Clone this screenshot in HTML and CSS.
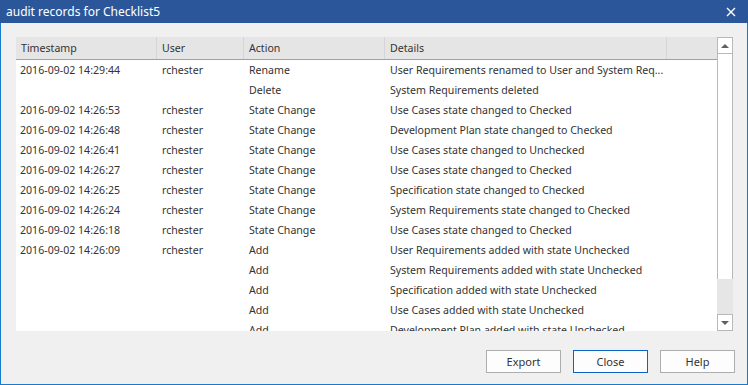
FILE: index.html
```html
<!DOCTYPE html>
<html lang="en">
<head>
  <meta charset="UTF-8" />
  <title>audit records for Checklist5</title>
  <link rel="stylesheet" href="styles.css">
</head>
<body>
  <div class="titlebar">
    <span class="title">audit records for Checklist5</span>
    <svg class="close-x" width="10" height="10" viewBox="0 0 10 10">
      <path d="M1 1 L9 9 M9 1 L1 9" stroke="#fff" stroke-width="1.4" fill="none"/>
    </svg>
  </div>

  <div class="dialog">
    <div class="listbox">
      <div class="list">
        <div class="row head">
          <div class="cell">Timestamp</div>
          <div class="cell">User</div>
          <div class="cell">Action</div>
          <div class="cell">Details</div>
          <div class="cell"></div>
        </div>
        <div class="rows">
          <div class="row"><div class="cell">2016-09-02 14:29:44</div><div class="cell">rchester</div><div class="cell">Rename</div><div class="cell">User Requirements renamed to User and System Req...</div></div>
          <div class="row"><div class="cell"></div><div class="cell"></div><div class="cell">Delete</div><div class="cell">System Requirements deleted</div></div>
          <div class="row"><div class="cell">2016-09-02 14:26:53</div><div class="cell">rchester</div><div class="cell">State Change</div><div class="cell">Use Cases state changed to Checked</div></div>
          <div class="row"><div class="cell">2016-09-02 14:26:48</div><div class="cell">rchester</div><div class="cell">State Change</div><div class="cell">Development Plan state changed to Checked</div></div>
          <div class="row"><div class="cell">2016-09-02 14:26:41</div><div class="cell">rchester</div><div class="cell">State Change</div><div class="cell">Use Cases state changed to Unchecked</div></div>
          <div class="row"><div class="cell">2016-09-02 14:26:27</div><div class="cell">rchester</div><div class="cell">State Change</div><div class="cell">Use Cases state changed to Checked</div></div>
          <div class="row"><div class="cell">2016-09-02 14:26:25</div><div class="cell">rchester</div><div class="cell">State Change</div><div class="cell">Specification state changed to Checked</div></div>
          <div class="row"><div class="cell">2016-09-02 14:26:24</div><div class="cell">rchester</div><div class="cell">State Change</div><div class="cell">System Requirements state changed to Checked</div></div>
          <div class="row"><div class="cell">2016-09-02 14:26:18</div><div class="cell">rchester</div><div class="cell">State Change</div><div class="cell">Use Cases state changed to Checked</div></div>
          <div class="row"><div class="cell">2016-09-02 14:26:09</div><div class="cell">rchester</div><div class="cell">Add</div><div class="cell">User Requirements added with state Unchecked</div></div>
          <div class="row"><div class="cell"></div><div class="cell"></div><div class="cell">Add</div><div class="cell">System Requirements added with state Unchecked</div></div>
          <div class="row"><div class="cell"></div><div class="cell"></div><div class="cell">Add</div><div class="cell">Specification added with state Unchecked</div></div>
          <div class="row"><div class="cell"></div><div class="cell"></div><div class="cell">Add</div><div class="cell">Use Cases added with state Unchecked</div></div>
          <div class="row"><div class="cell"></div><div class="cell"></div><div class="cell">Add</div><div class="cell">Development Plan added with state Unchecked</div></div>
        </div>
      </div>
      <div class="scrollbar">
        <div class="sb-btn"><span class="arrow up"></span></div>
        <div class="sb-thumb"></div>
        <div class="sb-track"></div>
        <div class="sb-btn"><span class="arrow down"></span></div>
      </div>
    </div>

    <div class="buttons">
      <button class="btn" type="button">Export</button>
      <button class="btn default" type="button">Close</button>
      <button class="btn" type="button">Help</button>
    </div>
  </div>
</body>
</html>
```

FILE: styles.css
```css
html, body {
  margin: 0;
  padding: 0;
}

body {
  width: 748px;
  height: 385px;
  overflow: hidden;
  background-color: #f0f0f0;
  font-family: "Noto Sans", "Open Sans", sans-serif;
  font-size: 10.6px;
  color: #333;
}

.titlebar {
  height: 23px;
  background-color: #2b579a;
  color: #fff;
  display: flex;
  align-items: center;
  justify-content: space-between;
  padding: 0 12px 0 6px;
  font-size: 12px;
}

.close-x {
  display: block;
}

.dialog {
  height: 362px;
  box-sizing: border-box;
  border: 1px solid #1979ca;
  border-top: none;
  padding: 14px 12px 0 15px;
}

.listbox {
  display: flex;
  width: 717px;
  height: 294px;
}

.list {
  width: 701px;
  background-color: #fff;
  overflow: hidden;
}

.row {
  display: grid;
  grid-template-columns: 141px 87px 141px 282px 1fr;
  height: 20px;
  align-items: center;
  white-space: nowrap;
}

.rows .row {
  padding-bottom: 1px;
  height: 19px;
}

.cell {
  padding-left: 5px;
  overflow: hidden;
}

.rows .cell:first-child {
  padding-left: 4px;
}

.head {
  height: 22px;
  background-color: #e5e5e5;
  border-bottom: 1px solid #a0a0a0;
  align-items: stretch;
}

.head .cell {
  display: flex;
  align-items: center;
  border-right: 1px solid #d5d5d5;
}

.head .cell:last-child {
  border-right: none;
}

.scrollbar {
  width: 16px;
  display: flex;
  flex-direction: column;
  background-color: #e6e6e6;
}

.sb-btn {
  height: 17px;
  box-sizing: border-box;
  background-color: #fff;
  border: 1px solid #b9b9b9;
  display: flex;
  align-items: center;
  justify-content: center;
}

.sb-thumb {
  height: 225px;
  box-sizing: border-box;
  background-color: #fff;
  border-left: 1px solid #b9b9b9;
  border-right: 1px solid #b9b9b9;
}

.sb-track {
  flex: 1;
}

.arrow {
  width: 0;
  height: 0;
  border-left: 4px solid transparent;
  border-right: 4px solid transparent;
}

.arrow.up {
  border-bottom: 4px solid #606060;
}

.arrow.down {
  border-top: 4px solid #606060;
}

.buttons {
  display: flex;
  justify-content: flex-end;
  gap: 12px;
  margin-top: 19px;
}

.btn {
  width: 75px;
  height: 23px;
  background-color: #fdfdfd;
  border: 1px solid #adadad;
  font-family: "Noto Sans", "Open Sans", sans-serif;
  font-size: 11px;
  color: #333;
  padding: 0;
}

.btn.default {
  border-color: #0a64c8;
}
```
